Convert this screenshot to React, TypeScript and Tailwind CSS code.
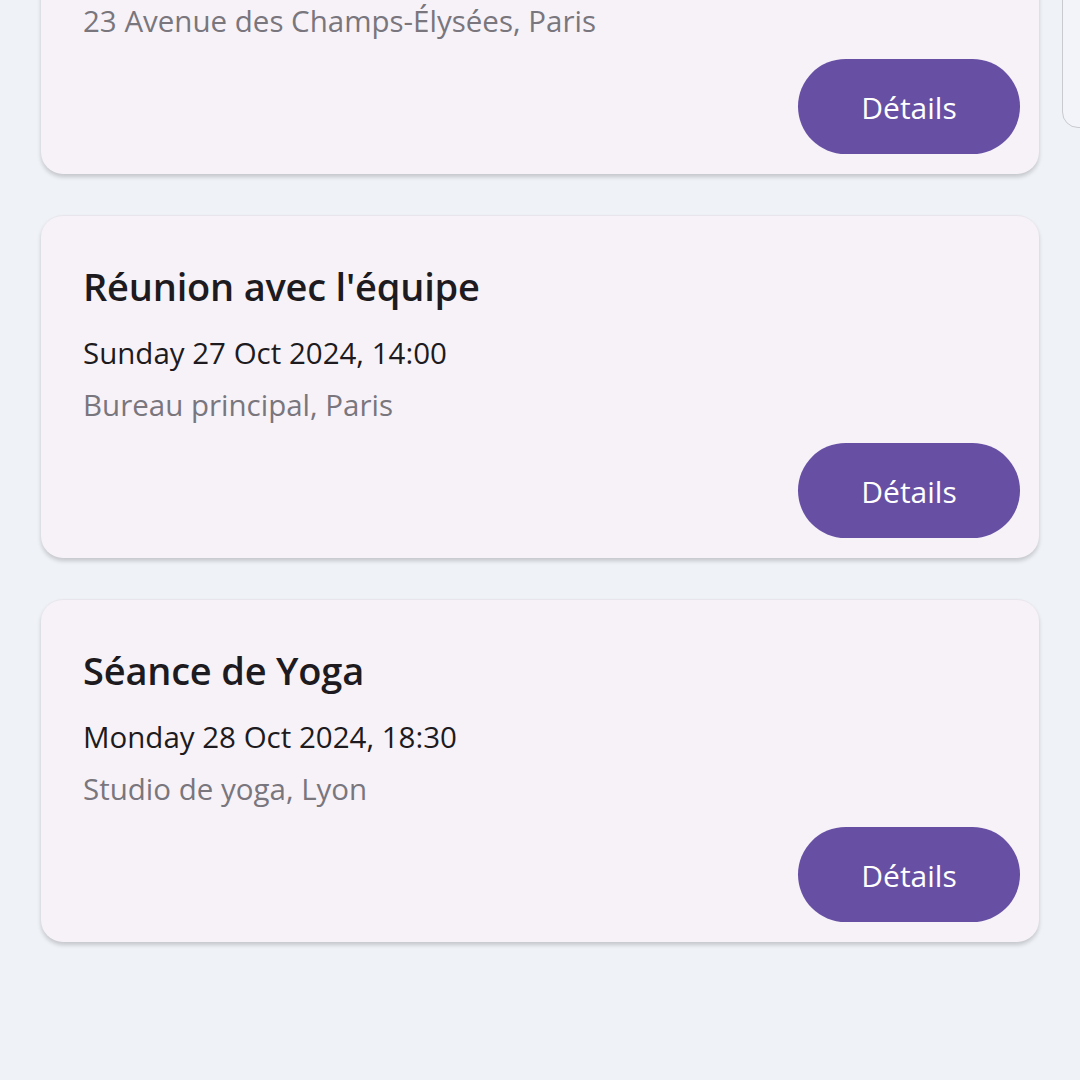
import React from "react";

interface EventItem {
  id: number;
  title: string;
  date: string;
  place: string;
}

const events: EventItem[] = [
  {
    id: 1,
    title: "Dîner au restaurant",
    date: "Saturday 26 Oct 2024, 20:00",
    place: "23 Avenue des Champs-Élysées, Paris",
  },
  {
    id: 2,
    title: "Réunion avec l'équipe",
    date: "Sunday 27 Oct 2024, 14:00",
    place: "Bureau principal, Paris",
  },
  {
    id: 3,
    title: "Séance de Yoga",
    date: "Monday 28 Oct 2024, 18:30",
    place: "Studio de yoga, Lyon",
  },
];

const EventCard: React.FC<{ event: EventItem }> = ({ event }) => (
  <div className="flex h-[343px] flex-col rounded-[22px] border-t border-[#e8e6ec] bg-[#f7f2f8] pb-[20px] pl-[42px] pr-[19px] pt-[48px] shadow-[0_3px_4px_rgba(0,0,0,0.18)]">
    <h2 className="text-[38px] font-semibold leading-[44px] tracking-[-0.2px] text-[#1d1b20]">
      {event.title}
    </h2>
    <p className="mt-[25px] text-[29.5px] leading-[40px] text-[#1d1b20]">
      {event.date}
    </p>
    <p className="mt-[12px] text-[29.5px] leading-[40px] text-[#79767d]">
      {event.place}
    </p>
    <button className="mt-auto flex h-[95px] w-[222px] items-center justify-center self-end rounded-full bg-[#6750a4] pt-[2px] text-[30px] font-medium text-white">
      Détails
    </button>
  </div>
);

export default function App() {
  return (
    <div
      className="relative h-[1080px] w-[1080px] overflow-hidden bg-[#eff2f7]"
      style={{ fontFamily: '"Open Sans", "Noto Sans", sans-serif' }}
    >
      <div className="-mt-[169px] flex flex-col gap-[41px] px-[41px]">
        {events.map((e) => (
          <EventCard key={e.id} event={e} />
        ))}
      </div>
      {/* edge of a side panel peeking in on the right */}
      <div className="absolute left-[1062px] top-[-40px] h-[168px] w-[60px] rounded-[16px] border border-[#c9cacf] bg-[#f3f4f9]" />
    </div>
  );
}
